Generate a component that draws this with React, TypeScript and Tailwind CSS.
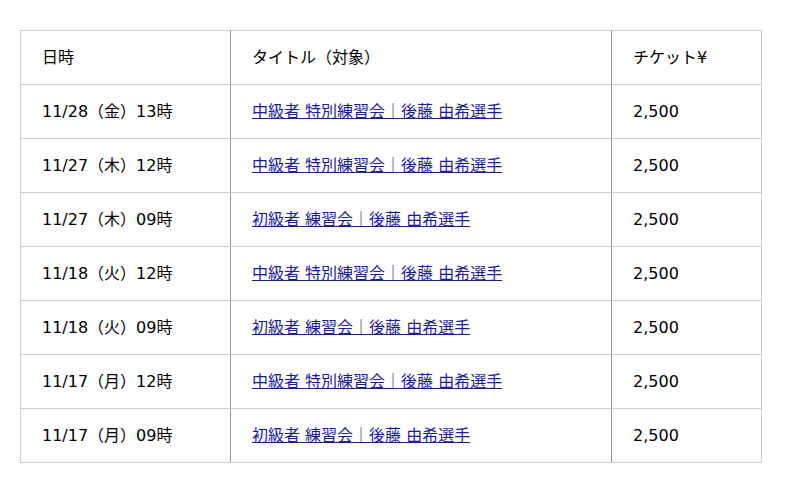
import React from "react";

const rows = [
  ["11/28（金）13時", "中級者 特別練習会｜後藤 由希選手"],
  ["11/27（木）12時", "中級者 特別練習会｜後藤 由希選手"],
  ["11/27（木）09時", "初級者 練習会｜後藤 由希選手"],
  ["11/18（火）12時", "中級者 特別練習会｜後藤 由希選手"],
  ["11/18（火）09時", "初級者 練習会｜後藤 由希選手"],
  ["11/17（月）12時", "中級者 特別練習会｜後藤 由希選手"],
  ["11/17（月）09時", "初級者 練習会｜後藤 由希選手"],
];

export default function App() {
  return (
    <div
      className="w-[800px] h-[493px] bg-white pt-[30px] pl-[20px] text-[16px] text-black"
      style={{ fontFamily: '"DejaVu Sans", "Noto Sans CJK JP", sans-serif' }}
    >
      <table className="w-[742px] border-collapse">
        <thead>
          <tr className="h-[54px]">
            <th className="w-[210px] border border-[#cccccc] border-r-[#999999] px-[21px] text-left font-normal">日時</th>
            <th className="w-[381px] border border-[#cccccc] border-r-[#999999] px-[21px] text-left font-normal">タイトル（対象）</th>
            <th className="border border-[#cccccc] px-[21px] text-left font-normal">チケット¥</th>
          </tr>
        </thead>
        <tbody>
          {rows.map((r, i) => (
            <tr key={i} className="h-[54px]">
              <td className="border border-[#cccccc] border-r-[#999999] px-[21px]">{r[0]}</td>
              <td className="border border-[#cccccc] border-r-[#999999] px-[21px]">
                <a href="#" className="text-[#1a1aa6] underline">{r[1]}</a>
              </td>
              <td className="border border-[#cccccc] px-[21px]">2,500</td>
            </tr>
          ))}
        </tbody>
      </table>
    </div>
  );
}
